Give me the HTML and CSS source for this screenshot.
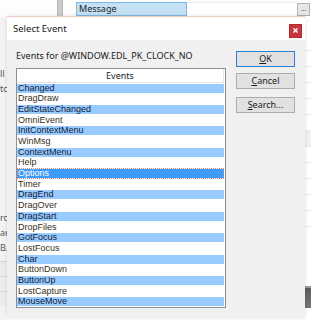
FILE: index.html
```html
<!DOCTYPE html>
<html>
<head>
    <title>Select Event</title>
    <link rel="stylesheet" href="styles.css">
</head>
<body>
    <div class="app">
        <div class="toolbar">
            <div class="splitter"></div>
            <div class="prop-name">Message</div>
            <div class="prop-value"></div>
            <div class="prop-btn">...</div>
        </div>
        <div class="workspace">
            <div class="side-left">
                <div class="frag frag-a">ll</div>
                <div class="frag">tc</div>
                <div class="frag frag-b">ro</div>
                <div class="frag">ar</div>
                <div class="frag">B.</div>
                <div class="cells">
                    <div class="cell"></div>
                    <div class="cell"></div>
                    <div class="cell"></div>
                </div>
            </div>
            <div class="center">
                <div class="status-text">Source name column value  Comments</div>
            </div>
            <div class="side-right">
                <div class="grid-row"></div>
                <div class="grid-row"></div>
                <div class="grid-row"></div>
                <div class="grid-row"></div>
                <div class="grid-row"></div>
                <div class="grid-row"></div>
                <div class="grid-row grid-row-grey"></div>
                <div class="grid-row"></div>
                <div class="grid-row"></div>
                <div class="grid-row"></div>
                <div class="grid-row"></div>
                <div class="grid-row"></div>
                <div class="dark-block"></div>
            </div>
        </div>
    </div>

    <!-- modal dialog over the designer -->
    <div class="dialog">
        <div class="titlebar">
            <span class="title">Select Event</span>
            <div class="close-btn">
                <svg width="5" height="5" viewBox="0 0 5 5">
                    <path d="M0.5 0.5 L4.5 4.5 M4.5 0.5 L0.5 4.5" stroke="#fff" stroke-width="1.4"/>
                </svg>
            </div>
        </div>
        <div class="dialog-body">
            <div class="events-col">
                <div class="events-label">Events for @WINDOW.EDL_PK_CLOCK_NO</div>
                <div class="listbox">
                    <div class="list-head"><span>Events</span></div>
                    <div class="list-row hl">Changed</div>
                    <div class="list-row">DragDraw</div>
                    <div class="list-row hl">EditStateChanged</div>
                    <div class="list-row">OmniEvent</div>
                    <div class="list-row hl">InitContextMenu</div>
                    <div class="list-row">WinMsg</div>
                    <div class="list-row hl">ContextMenu</div>
                    <div class="list-row">Help</div>
                    <div class="list-row selected">Options</div>
                    <div class="list-row">Timer</div>
                    <div class="list-row hl">DragEnd</div>
                    <div class="list-row">DragOver</div>
                    <div class="list-row hl">DragStart</div>
                    <div class="list-row">DropFiles</div>
                    <div class="list-row hl">GotFocus</div>
                    <div class="list-row">LostFocus</div>
                    <div class="list-row hl">Char</div>
                    <div class="list-row">ButtonDown</div>
                    <div class="list-row hl">ButtonUp</div>
                    <div class="list-row">LostCapture</div>
                    <div class="list-row hl">MouseMove</div>
                </div>
            </div>
            <div class="buttons">
                <div class="btn btn-default"><u>O</u>K</div>
                <div class="btn btn-cancel"><u>C</u>ancel</div>
                <div class="btn btn-search"><u>S</u>earch...</div>
            </div>
        </div>
    </div>
</body>
</html>
```

FILE: styles.css
```css
* {
    margin: 0;
    padding: 0;
    box-sizing: border-box;
}

body {
    width: 311px;
    height: 320px;
    overflow: hidden;
    position: relative;
    background: #fafafa;
    font-family: "Noto Sans", "Open Sans", sans-serif;
    font-size: 9px;
    color: #222;
}

/* designer in the background */
.app {
    height: 320px;
    display: flex;
    flex-direction: column;
}

.toolbar {
    height: 17px;
    display: flex;
    align-items: flex-end;
    padding-left: 57px;
    background: #fdfdfd;
}

.splitter {
    width: 6px;
    height: 17px;
    background: #cbcbcb;
    border-left: 1px solid #b5b5b5;
    border-right: 1px solid #b5b5b5;
    margin-right: 13px;
}

.prop-name {
    width: 111px;
    height: 14px;
    margin-bottom: 1px;
    background: #c4e0f3;
    border: 1px solid #7fb7e6;
    padding-left: 2px;
    line-height: 12px;
    color: #1e1e1e;
}

.prop-value {
    flex: 1;
    height: 15px;
    border-top: 1px solid #ececec;
    background: #fff;
}

.prop-btn {
    width: 13px;
    height: 13px;
    margin: 0 1px 1px 0;
    background: #e6e6e6;
    border: 1px solid #b0b0b0;
    font-size: 7px;
    line-height: 9px;
    text-align: center;
    color: #557;
}

.workspace {
    flex: 1;
    display: flex;
}

.side-left {
    width: 7px;
    background: #f3f3f3;
    overflow: hidden;
    padding-top: 49px;
}

.frag {
    height: 15px;
    line-height: 15px;
    color: #555;
    white-space: nowrap;
}

.frag-b {
    margin-top: 114px;
}

.cells {
    margin-top: 6px;
}

.cell {
    height: 15px;
    background: #ececec;
    border-top: 1px solid #d4d4d4;
}

.center {
    flex: 1;
    display: flex;
    flex-direction: column;
    justify-content: flex-end;
}

.status-text {
    height: 3px;
    padding-left: 58px;
    line-height: 14px;
    color: #333;
    overflow: hidden;
    white-space: nowrap;
    font-weight: bold;
}

.side-right {
    width: 6px;
    background: #fff;
    padding-top: 18px;
}

.grid-row {
    height: 16px;
    border-bottom: 1px solid #e8e8e8;
}

.grid-row-grey {
    background: #f0f0f0;
}

.dark-block {
    margin-top: 59px;
    height: 22px;
    border-top: 2px solid #9a9a9a;
    background: linear-gradient(#5c5c5c, #777);
}

/* dialog */
.dialog {
    position: absolute;
    left: 7px;
    top: 16px;
    width: 298px;
    height: 301px;
    background: #f0f0f0;
    border-top: 1px solid #f0cbc4;
    box-shadow: 0 0 4px rgba(0, 0, 0, 0.12);
    display: flex;
    flex-direction: column;
}

.titlebar {
    height: 23px;
    background: #fff;
    display: flex;
    justify-content: space-between;
    align-items: center;
    padding: 0 3px 0 6px;
}

.title {
    font-size: 9.5px;
    color: #1a1a1a;
}

.close-btn {
    width: 13px;
    height: 14px;
    margin-top: 5px;
    background: #c8363d;
    border: 1px solid #b02a31;
    display: flex;
    align-items: center;
    justify-content: center;
}

.dialog-body {
    flex: 1;
    display: flex;
    gap: 10px;
    padding: 10px 10px 9px 9px;
}

.events-col {
    width: 210px;
    display: flex;
    flex-direction: column;
}

.events-label {
    height: 12px;
    line-height: 12px;
    margin-bottom: 6px;
    white-space: nowrap;
    color: #1a1a1a;
}

.listbox {
    background: #fff;
    border: 1px solid #8a8f96;
}

.list-head {
    height: 14px;
    border-bottom: 1px solid #e5e5e5;
    padding-right: 1px;
}

.list-head span {
    display: block;
    height: 13px;
    line-height: 13px;
    text-align: center;
    border-right: 1px solid #e5e5e5;
    color: #222;
}

/* band is inset by ~1px so white shows between highlighted rows */
.list-row {
    height: 10.7px;
    line-height: 10.7px;
    margin-right: 1px;
    padding-left: 1px;
    font-family: "Liberation Sans", Arial, sans-serif;
    font-size: 9px;
    color: #3a3120;
    white-space: nowrap;
}

.list-row.hl {
    background: linear-gradient(transparent 0.85px, #99cbff 0.85px, #99cbff 9.85px, transparent 9.85px);
    color: #10203a;
}

.list-row.selected {
    background: linear-gradient(transparent 0.85px, #3d9bfa 0.85px, #3d9bfa 9.85px, transparent 9.85px);
    color: #fff;
    outline: 1px dotted #d98a7a;
    outline-offset: -1px;
}

.buttons {
    width: 59px;
    padding-top: 1px;
    display: flex;
    flex-direction: column;
}

.btn {
    height: 16px;
    line-height: 14px;
    text-align: center;
    background: #e1e1e1;
    border: 1px solid #adadad;
    color: #1a1a1a;
}

.btn-default {
    border-color: #2a7fd8;
}

.btn-cancel {
    margin-top: 6px;
}

.btn-search {
    margin-top: 8px;
}
```
